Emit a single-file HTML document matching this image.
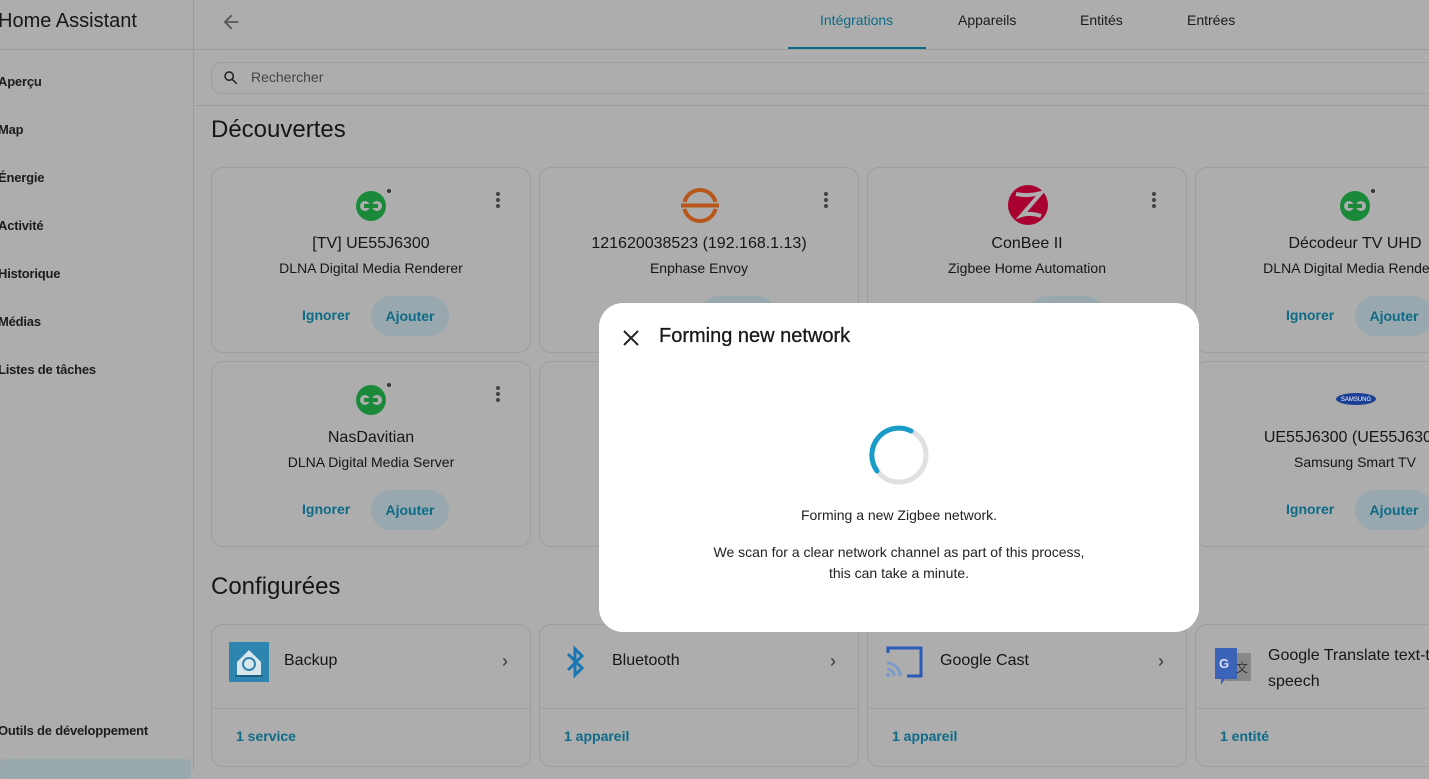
<!DOCTYPE html>
<html><head><meta charset="utf-8"><style>
*{box-sizing:border-box;margin:0;padding:0}
body{width:1429px;height:770px;overflow:hidden;background:#adadad;font-family:"Liberation Sans",sans-serif;color:#161616;position:relative}
.abs{position:absolute}
.side{left:0;top:0;width:194px;height:770px;border-right:1px solid #9c9c9c}
.side .t{position:absolute;left:-2px;top:10px;font-size:20px;color:#161616}
.side .it{position:absolute;left:-2px;font-size:13px;font-weight:bold;color:#1c1c1c;letter-spacing:-0.2px}
.hline{height:1px;background:#9c9c9c}
.tab{position:absolute;top:12px;font-size:14px;color:#1a1a1a}
.card{position:absolute;width:320px;border:1px solid #9e9e9e;border-radius:12px;background:#adadad}
.disc{height:186px}
.disc .ic{position:absolute;left:140px;top:17px;width:40px;height:40px}
.disc .ti{position:absolute;left:0;right:0;top:67px;text-align:center;font-size:16px;white-space:nowrap}
.disc .su{position:absolute;left:0;right:0;top:92px;text-align:center;font-size:14px;white-space:nowrap}
.disc .ig{position:absolute;left:90px;top:139px;font-size:14px;color:#0d6b87;font-weight:bold}
.disc .aj{position:absolute;left:159px;top:128px;width:78px;height:40px;border-radius:20px;background:#98a8ae;color:#0d6b87;font-size:14px;font-weight:bold;text-align:center;line-height:40px}
.disc .dots{position:absolute;left:284px;top:24px;width:4px}
.disc .dots i{display:block;width:4px;height:4px;border-radius:2px;background:#444;margin-bottom:2px}
.conf{top:624px;height:143px}
.conf .nm{position:absolute;left:72px;top:27px;font-size:16px}
.conf .ch{position:absolute;left:290px;top:26px;font-size:18px;color:#333}
.conf .dv{position:absolute;left:0;right:0;top:83px;height:1px;background:#9e9e9e}
.conf .ln{position:absolute;left:24px;top:103px;font-size:14px;color:#0d6b87;font-weight:bold}
.dlg{left:599px;top:303px;width:600px;height:329px;background:#fff;border-radius:24px}
</style></head><body>
<div class="abs side">
<div class="t">Home Assistant</div>
<div class="it" style="top:74px">Aperçu</div>
<div class="it" style="top:122px">Map</div>
<div class="it" style="top:170px">Énergie</div>
<div class="it" style="top:218px">Activité</div>
<div class="it" style="top:266px">Historique</div>
<div class="it" style="top:314px">Médias</div>
<div class="it" style="top:362px">Listes de tâches</div>
<div class="it" style="top:723px">Outils de développement</div>
<div class="abs" style="left:0;top:759px;width:191px;height:20px;background:#9aa9ae;border-radius:4px"></div>
</div>
<div class="abs hline" style="left:0;top:49px;width:1429px"></div>
<div class="abs hline" style="left:195px;top:105px;width:1234px"></div>
<svg class="abs" style="left:220px;top:11px" width="22" height="22" viewBox="0 0 24 24"><path d="M20 11H7.8l5.6-5.6L12 4l-8 8 8 8 1.4-1.4L7.8 13H20z" fill="#555"/></svg>
<div class="tab" style="left:820px;color:#0d6b87">Intégrations</div>
<div class="tab" style="left:958px">Appareils</div>
<div class="tab" style="left:1080px">Entités</div>
<div class="tab" style="left:1187px">Entrées</div>
<div class="abs" style="left:788px;top:47px;width:138px;height:2px;background:#0d6b87"></div>
<div class="abs" style="left:211px;top:62px;width:1230px;height:32px;border:1px solid #9e9e9e;border-radius:10px"></div>
<svg class="abs" style="left:222px;top:69px" width="18" height="18" viewBox="0 0 24 24"><path d="M9.5 3a6.5 6.5 0 0 1 5.2 10.4l5.6 5.6-1.4 1.4-5.6-5.6A6.5 6.5 0 1 1 9.5 3m0 2a4.5 4.5 0 1 0 0 9 4.5 4.5 0 0 0 0-9" fill="#222"/></svg>
<div class="abs" style="left:251px;top:69px;font-size:14px;color:#444">Rechercher</div>
<div class="abs" style="left:211px;top:116px;font-size:24px">Découvertes</div>
<div class="abs" style="left:211px;top:573px;font-size:24px">Configurées</div>

<div class="card disc" style="left:211px;top:167px">
<svg class="ic" viewBox="0 0 40 40"><circle cx="19" cy="21" r="15" fill="#1a8a3a"/><circle cx="13" cy="21" r="5" fill="#adadad"/><circle cx="25" cy="21" r="5" fill="#adadad"/><rect x="12" y="19" width="14" height="4" fill="#1a8a3a"/><circle cx="37" cy="6" r="2" fill="#333"/></svg>
<div class="dots"><i></i><i></i><i></i></div>
<div class="ti">[TV] UE55J6300</div><div class="su">DLNA Digital Media Renderer</div>
<div class="ig">Ignorer</div><div class="aj">Ajouter</div></div>
<div class="card disc" style="left:539px;top:167px">
<svg class="ic" viewBox="0 0 40 40"><path d="M4.5 17A16 16 0 0 1 35.5 17M4.5 24A16 16 0 0 0 35.5 24" stroke="#b8571a" stroke-width="4" fill="none"/><rect x="1" y="18.5" width="38" height="4" fill="#b8571a"/></svg>
<div class="dots"><i></i><i></i><i></i></div>
<div class="ti">121620038523 (192.168.1.13)</div><div class="su">Enphase Envoy</div>
<div class="aj">Ajouter</div></div>
<div class="card disc" style="left:867px;top:167px">
<svg class="ic" viewBox="0 0 40 40"><circle cx="20" cy="20" r="20" fill="#a8002f"/><path d="M8 9C16 11 26 10 33 8L14 30C20 28 28 29 33 31" stroke="#adadad" stroke-width="4" fill="none"/></svg>
<div class="dots"><i></i><i></i><i></i></div>
<div class="ti">ConBee II</div><div class="su">Zigbee Home Automation</div>
<div class="aj">Ajouter</div></div>
<div class="card disc" style="left:1195px;top:167px">
<svg class="ic" viewBox="0 0 40 40"><circle cx="19" cy="21" r="15" fill="#1a8a3a"/><circle cx="13" cy="21" r="5" fill="#adadad"/><circle cx="25" cy="21" r="5" fill="#adadad"/><rect x="12" y="19" width="14" height="4" fill="#1a8a3a"/><circle cx="37" cy="6" r="2" fill="#333"/></svg>
<div class="ti">Décodeur TV UHD</div><div class="su">DLNA Digital Media Renderer</div>
<div class="ig">Ignorer</div><div class="aj">Ajouter</div></div>

<div class="card disc" style="left:211px;top:361px">
<svg class="ic" viewBox="0 0 40 40"><circle cx="19" cy="21" r="15" fill="#1a8a3a"/><circle cx="13" cy="21" r="5" fill="#adadad"/><circle cx="25" cy="21" r="5" fill="#adadad"/><rect x="12" y="19" width="14" height="4" fill="#1a8a3a"/><circle cx="37" cy="6" r="2" fill="#333"/></svg>
<div class="dots"><i></i><i></i><i></i></div>
<div class="ti">NasDavitian</div><div class="su">DLNA Digital Media Server</div>
<div class="ig">Ignorer</div><div class="aj">Ajouter</div></div>
<div class="card disc" style="left:539px;top:361px"></div>
<div class="card disc" style="left:867px;top:361px"></div>
<div class="card disc" style="left:1195px;top:361px">
<svg class="ic" viewBox="0 0 40 40"><ellipse cx="20" cy="20" rx="20" ry="6" fill="#1b3f94"/><text x="20" y="22" font-size="6" fill="#fff" text-anchor="middle" font-family="Liberation Sans">SAMSUNG</text></svg>
<div class="ti">UE55J6300 (UE55J6300)</div><div class="su">Samsung Smart TV</div>
<div class="ig">Ignorer</div><div class="aj">Ajouter</div></div>

<div class="card conf" style="left:211px">
<svg class="abs" style="left:17px;top:17px" width="40" height="40" viewBox="0 0 40 40"><rect width="40" height="40" fill="#2e86b0"/><path d="M8 20 20 8 32 20V33H8Z" fill="#d9e6ec"/><circle cx="20" cy="22" r="6" fill="none" stroke="#2e86b0" stroke-width="2"/><rect x="6" y="33" width="28" height="2" fill="#1d5f80"/></svg>
<div class="nm">Backup</div><div class="ch">›</div><div class="dv"></div><div class="ln">1 service</div></div>
<div class="card conf" style="left:539px">
<svg class="abs" style="left:24px;top:17px" width="24" height="40" viewBox="0 0 24 40"><path d="M4 12 18 26 11 33V7L18 14 4 28" stroke="#1976b5" stroke-width="3" fill="none"/></svg>
<div class="nm">Bluetooth</div><div class="ch">›</div><div class="dv"></div><div class="ln">1 appareil</div></div>
<div class="card conf" style="left:867px">
<svg class="abs" style="left:17px;top:20px" width="40" height="34" viewBox="0 0 40 34"><path d="M3 8V3H36V31H22" stroke="#2b5bb8" stroke-width="3" fill="none"/><path d="M2 18a13 13 0 0 1 13 13M2 24a7 7 0 0 1 7 7" stroke="#7e9acb" stroke-width="3" fill="none"/><circle cx="3" cy="30" r="2" fill="#7e9acb"/></svg>
<div class="nm">Google Cast</div><div class="ch">›</div><div class="dv"></div><div class="ln">1 appareil</div></div>
<div class="card conf" style="left:1195px">
<svg class="abs" style="left:17px;top:20px" width="40" height="40" viewBox="0 0 40 40"><rect x="12" y="8" width="26" height="28" fill="#888"/><path d="M2 3H24V34H12L8 40V34H2Z" fill="#3b64b8"/><text x="11" y="23" font-size="13" font-weight="bold" fill="#dde" text-anchor="middle" font-family="Liberation Sans">G</text><text x="29" y="27" font-size="12" fill="#333" text-anchor="middle" font-family="Noto Sans CJK SC">文</text></svg>
<div class="nm" style="top:18px;line-height:26px;width:200px">Google Translate text-to-speech</div><div class="dv"></div><div class="ln">1 entité</div></div>

<div class="abs dlg">
<svg class="abs" style="left:22px;top:25px" width="20" height="20" viewBox="0 0 20 20"><path d="M3 3 17 17M17 3 3 17" stroke="#222" stroke-width="2"/></svg>
<div class="abs" style="left:60px;top:22px;font-size:20px;color:#1a1a1a;-webkit-text-stroke:0.3px #1a1a1a">Forming new network</div>
<svg class="abs" style="left:268px;top:121px" width="64" height="64" viewBox="0 0 64 64"><circle cx="32" cy="31" r="27" fill="none" stroke="#e0e0e0" stroke-width="5"/><path d="M10 47A27 27 0 0 1 44 7" fill="none" stroke="#1a9cc9" stroke-width="5" stroke-linecap="round"/></svg>
<div class="abs" style="left:0;right:0;top:204px;text-align:center;font-size:14px;color:#222">Forming a new Zigbee network.</div>
<div class="abs" style="left:0;right:0;top:239px;text-align:center;font-size:14px;line-height:21px;color:#222">We scan for a clear network channel as part of this process,<br>this can take a minute.</div>
</div>
</body></html>
